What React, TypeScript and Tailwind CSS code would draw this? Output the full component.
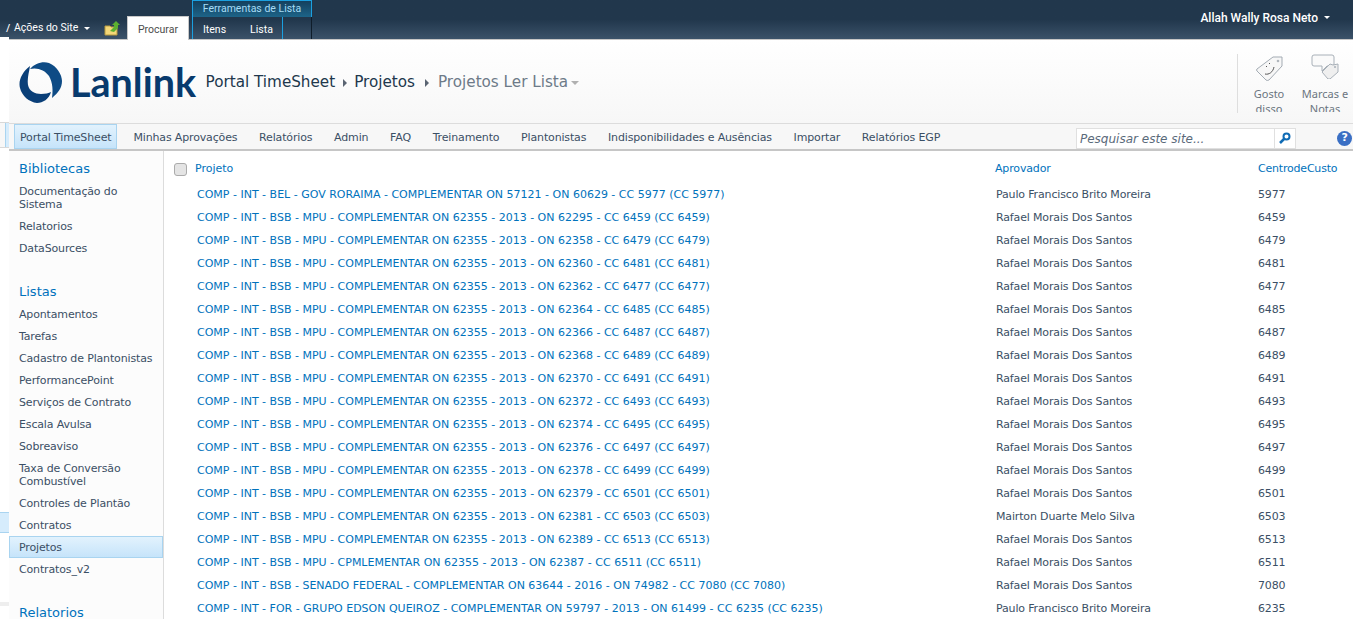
import React from 'react';

const NAV = ['Minhas Aprovações', 'Relatórios', 'Admin', 'FAQ', 'Treinamento', 'Plantonistas', 'Indisponibilidades e Ausências', 'Importar', 'Relatórios EGP'];

const ROWS: [string, string, string][] = [
  ['COMP - INT - BEL - GOV RORAIMA - COMPLEMENTAR ON 57121 - ON 60629 - CC 5977 (CC 5977)', 'Paulo Francisco Brito Moreira', '5977'],
  ['COMP - INT - BSB - MPU - COMPLEMENTAR ON 62355 - 2013 - ON 62295 - CC 6459 (CC 6459)', 'Rafael Morais Dos Santos', '6459'],
  ['COMP - INT - BSB - MPU - COMPLEMENTAR ON 62355 - 2013 - ON 62358 - CC 6479 (CC 6479)', 'Rafael Morais Dos Santos', '6479'],
  ['COMP - INT - BSB - MPU - COMPLEMENTAR ON 62355 - 2013 - ON 62360 - CC 6481 (CC 6481)', 'Rafael Morais Dos Santos', '6481'],
  ['COMP - INT - BSB - MPU - COMPLEMENTAR ON 62355 - 2013 - ON 62362 - CC 6477 (CC 6477)', 'Rafael Morais Dos Santos', '6477'],
  ['COMP - INT - BSB - MPU - COMPLEMENTAR ON 62355 - 2013 - ON 62364 - CC 6485 (CC 6485)', 'Rafael Morais Dos Santos', '6485'],
  ['COMP - INT - BSB - MPU - COMPLEMENTAR ON 62355 - 2013 - ON 62366 - CC 6487 (CC 6487)', 'Rafael Morais Dos Santos', '6487'],
  ['COMP - INT - BSB - MPU - COMPLEMENTAR ON 62355 - 2013 - ON 62368 - CC 6489 (CC 6489)', 'Rafael Morais Dos Santos', '6489'],
  ['COMP - INT - BSB - MPU - COMPLEMENTAR ON 62355 - 2013 - ON 62370 - CC 6491 (CC 6491)', 'Rafael Morais Dos Santos', '6491'],
  ['COMP - INT - BSB - MPU - COMPLEMENTAR ON 62355 - 2013 - ON 62372 - CC 6493 (CC 6493)', 'Rafael Morais Dos Santos', '6493'],
  ['COMP - INT - BSB - MPU - COMPLEMENTAR ON 62355 - 2013 - ON 62374 - CC 6495 (CC 6495)', 'Rafael Morais Dos Santos', '6495'],
  ['COMP - INT - BSB - MPU - COMPLEMENTAR ON 62355 - 2013 - ON 62376 - CC 6497 (CC 6497)', 'Rafael Morais Dos Santos', '6497'],
  ['COMP - INT - BSB - MPU - COMPLEMENTAR ON 62355 - 2013 - ON 62378 - CC 6499 (CC 6499)', 'Rafael Morais Dos Santos', '6499'],
  ['COMP - INT - BSB - MPU - COMPLEMENTAR ON 62355 - 2013 - ON 62379 - CC 6501 (CC 6501)', 'Rafael Morais Dos Santos', '6501'],
  ['COMP - INT - BSB - MPU - COMPLEMENTAR ON 62355 - 2013 - ON 62381 - CC 6503 (CC 6503)', 'Mairton Duarte Melo Silva', '6503'],
  ['COMP - INT - BSB - MPU - COMPLEMENTAR ON 62355 - 2013 - ON 62389 - CC 6513 (CC 6513)', 'Rafael Morais Dos Santos', '6513'],
  ['COMP - INT - BSB - MPU - CPMLEMENTAR ON 62355 - 2013 - ON 62387 - CC 6511 (CC 6511)', 'Rafael Morais Dos Santos', '6511'],
  ['COMP - INT - BSB - SENADO FEDERAL - COMPLEMENTAR ON 63644 - 2016 - ON 74982 - CC 7080 (CC 7080)', 'Rafael Morais Dos Santos', '7080'],
  ['COMP - INT - FOR - GRUPO EDSON QUEIROZ - COMPLEMENTAR ON 59797 - 2013 - ON 61499 - CC 6235 (CC 6235)', 'Paulo Francisco Brito Moreira', '6235'],
];

const Caret = () => <span className="ml-[6px] inline-block h-0 w-0 border-x-[3px] border-t-[3px] border-x-transparent border-t-white align-middle" />;

const Sep = ({ wide }: { wide?: boolean }) => (
  <span className={`${wide ? 'ml-[10px] mr-[9px]' : 'mx-[7.5px]'} mt-[2px] inline-block h-0 w-0 border-y-[4px] border-l-[4px] border-y-transparent border-l-[#5a6472]`} />
);

function SideItem({ children, active }: { children: React.ReactNode; active?: boolean }) {
  return (
    <div className={`leading-[13px] tracking-[-0.15px] ${active ? 'border border-[#a9d4f0] bg-gradient-to-b from-[#e2f2fd] to-[#c6e4fa] py-[3.5px] pl-[9px]' : 'py-[4.5px] pl-[10px]'}`}>
      {children}
    </div>
  );
}

export default function App() {
  return (
    <div className="relative h-[621px] w-[1353px] overflow-hidden bg-white text-[11px] text-[#3b4f65]" style={{ fontFamily: '"DejaVu Sans", Verdana, sans-serif' }}>
      {/* ribbon */}
      <div className="flex h-[40px] items-stretch border-b border-[#c6c6c6] bg-gradient-to-b from-[#21374c] via-[#21374c] to-[#3b5269] text-[10.5px] text-white" style={{ fontFamily: 'Roboto, sans-serif' }}>
        <div className="flex w-[127px] items-center pl-[14px] pt-[17px]">
          <span className="whitespace-nowrap">Ações do Site</span>
          <Caret />
          <svg className="ml-[14px]" width="17" height="15" viewBox="0 0 17 15">
            <path d="M1 5h5l1 1h6v8H1z" fill="#f3d778" stroke="#b79a3f" />
            <path d="M6 10l4-4V4H8l4-4 4 4h-2v3l-4 4z" fill="#5cb030" />
          </svg>
        </div>
        <div className="mt-[16px] flex h-[24px] w-[62px] items-center justify-center border-x border-t border-[#c8c8c8] bg-white pt-[3px] text-[#4c4c4c]">Procurar</div>
        <div className="ml-[3px] flex w-[120px] flex-col">
          <div className="flex h-[17px] items-center justify-center border-x border-t border-[#1ba0e0] bg-gradient-to-b from-[#14405e] to-[#1d6488] text-[#a6dcf5]">Ferramentas de Lista</div>
          <div className="flex flex-1 items-center border-x border-x-[#0f1d2a] border-l-[#1ba0e0] pl-[10px]">
            <span className="pt-[3px]">Itens</span>
            <span className="ml-[24px] pt-[3px]">Lista</span>
            <span className="ml-[9px] h-full w-px bg-[#1ba0e0]" />
          </div>
        </div>
        <div className="ml-auto flex items-center pr-[23px] pb-[4px] text-[12px] font-medium">
          Allah Wally Rosa Neto
          <Caret />
        </div>
      </div>

      {/* site title */}
      <div className="flex h-[84px] border-b border-[#dcdcdc] bg-gradient-to-b from-white to-[#f7f7f7] pl-[19px]">
        <div className="flex items-center pt-[1px]">
          <svg width="44" height="43" viewBox="0 0 44 43">
            <path d="M11 8C16 2 24 0 30 2c8 3 13 12 13 18 0 7-4 12-10 17 1-7 1-15-3-22C26 9 18 6 11 8z" fill="#0e4b85" />
            <path d="M11 5c-1 7-3 12-2 19 1 6 7 9 13 9 4 0 8-1 10-2-2 7-8 11-14 11-8-1-15-7-17-15C-1 20 3 11 11 5z" fill="#0a3f78" />
          </svg>
          <span className="ml-[7px] text-[39.5px] font-bold leading-none text-[#083a6d]" style={{ fontFamily: 'Lato, sans-serif' }}>Lanlink</span>
        </div>
        <div className="ml-[9.5px] flex items-center whitespace-nowrap pt-[1px] text-[15.2px] text-[#21374c]">
          <span>Portal TimeSheet</span>
          <Sep />
          <span>Projetos</span>
          <Sep wide />
          <span className="text-[#6d7a88]">Projetos Ler Lista</span>
          <span className="ml-[3px] mt-[2px] inline-block h-0 w-0 border-x-[4px] border-t-[4px] border-x-transparent border-t-[#b0b0b0]" />
        </div>
        <div className="ml-auto flex pr-[3px]">
          <div className="my-[14px] h-[59px] w-px bg-[#dedede]" />
          <div className="mt-[14px] flex h-[58px] w-[62px] flex-col items-center overflow-hidden text-center leading-[15px] text-[#6b7580]" style={{ fontFamily: '"Noto Sans", sans-serif' }}>
            <svg className="mt-[2px] shrink-0" width="27" height="25" viewBox="0 0 27 25">
              <path d="M1 13L17 1h9v9L13 24q-2 1-3 0L1 15q-1-1 0-2z" fill="#f7f7f7" stroke="#a3abb3" />
              <circle cx="22" cy="5" r="1.3" fill="#b0b6bc" />
              <path d="M10 11l1-1M13 8l1-1M9 18c4 1 8-2 9-7" fill="none" stroke="#555" />
            </svg>
            <span className="mt-[5px] w-[40px]">Gosto disso</span>
          </div>
          <div className="mt-[14px] flex h-[58px] w-[50px] flex-col items-center overflow-hidden text-center leading-[15px] text-[#6b7580]" style={{ fontFamily: '"Noto Sans", sans-serif' }}>
            <svg className="shrink-0" width="28" height="25" viewBox="0 0 28 25">
              <path d="M3 1h18q2 0 2 2v7q0 2-2 2h-5l-5 5v-5H3q-2 0-2-2V3q0-2 2-2z" fill="#fafafa" stroke="#a8b0b8" />
              <path d="M11 18l8-8 3 1 5-1v8l-8 7h-2z" fill="#efefef" stroke="#a8b0b8" />
              <circle cx="24" cy="13" r="1" fill="#a8b0b8" />
            </svg>
            <span className="mt-[7px] whitespace-nowrap">Marcas e<br />Notas</span>
          </div>
        </div>
      </div>

      {/* top nav */}
      <div className="flex h-[27px] border-b-2 border-[#c6c6c6] bg-[#f7f7f7] pl-[14px] tracking-[-0.15px]">
        <div className="flex h-[25px] items-center border border-[#a9d4f0] bg-gradient-to-b from-[#e2f2fd] to-[#c6e4fa] px-[5px] pt-[3px]">Portal TimeSheet</div>
        <div className="ml-[16px] flex items-center gap-[21.7px] whitespace-nowrap pt-[3px]">
          {NAV.map((n) => <span key={n}>{n}</span>)}
        </div>
        <div className="ml-auto flex items-center pl-[4px] pt-[3px]">
          <div className="flex h-[21px] w-[220px] items-center border border-[#e0e0e0] bg-white">
            <span className="flex-1 pl-[3px] pt-[1px] text-[12px] italic tracking-normal text-[#5a6a7a]">Pesquisar este site...</span>
            <div className="flex h-full w-[21px] items-center justify-center border-l border-[#e0e0e0]">
              <svg width="12" height="12" viewBox="0 0 12 12"><circle cx="7.5" cy="4.5" r="3" fill="none" stroke="#0f6bb5" strokeWidth="2" /><path d="M5 7l-4 4" stroke="#0f6bb5" strokeWidth="2.5" /></svg>
            </div>
          </div>
          <div className="ml-[41px] mr-[1px] flex h-[15px] w-[15px] items-center justify-center rounded-full bg-[#3a6fc4] text-[11px] font-bold text-white">?</div>
        </div>
      </div>

      <div className="flex">
        {/* quick launch */}
        <div className="h-[468px] w-[164px] shrink-0 overflow-hidden border-r border-[#dcdcdc] bg-[#fcfcfc] pl-[9px] pt-[10px]">
          <div className="mb-[3px] px-[10px] text-[13px] leading-[16px] text-[#0072bc]">Bibliotecas</div>
          <SideItem>Documentação do Sistema</SideItem>
          <SideItem>Relatorios</SideItem>
          <SideItem>DataSources</SideItem>
          <div className="mb-[3px] mt-[25px] px-[10px] text-[13px] leading-[16px] text-[#0072bc]">Listas</div>
          {['Apontamentos', 'Tarefas', 'Cadastro de Plantonistas', 'PerformancePoint', 'Serviços de Contrato', 'Escala Avulsa', 'Sobreaviso', 'Taxa de Conversão Combustível', 'Controles de Plantão', 'Contratos'].map((s) => <SideItem key={s}>{s}</SideItem>)}
          <SideItem active>Projetos</SideItem>
          <SideItem>Contratos_v2</SideItem>
          <div className="mt-[25px] px-[10px] text-[13px] leading-[16px] text-[#0072bc]">Relatorios</div>
        </div>

        {/* list */}
        <div className="min-w-0 flex-1 pl-[10px]">
          <div className="flex h-[33px] items-center pt-[3px] text-[#0072bc]">
            <span className="h-[13px] w-[13px] rounded-[3px] border border-[#ababab] bg-[#e4e4e4]" />
            <span className="ml-[8px] w-[800px]">Projeto</span>
            <span className="w-[263px] tracking-[-0.15px]">Aprovador</span>
            <span className="tracking-[-0.2px]">CentrodeCusto</span>
          </div>
          {ROWS.map((r) => (
            <div key={r[2]} className="flex h-[23px] items-center whitespace-nowrap">
              <span className="w-[822px] pl-[23px] text-[#0072bc]">{r[0]}</span>
              <span className="w-[262px] tracking-[-0.15px]">{r[1]}</span>
              <span className="tracking-[-0.15px]">{r[2]}</span>
            </div>
          ))}
        </div>
      </div>

      {/* offset strip along the left edge of the capture */}
      <div className="absolute left-0 top-[37px] flex h-[584px] w-[9px] flex-col bg-white">
        <div className="mt-[85px] flex h-[26px] border-y border-[#d8d8d8] bg-[#f7f7f7]">
          <div className="ml-[5px] flex-1 border-l border-[#a9d4f0] bg-[#d6ecfc]" />
        </div>
        <div className="mt-[364px] h-[21px] border-y border-[#a9d4f0] bg-[#d6ecfc]" />
        <div className="mt-[69px] h-[4px] bg-[#eeeeee]" />
      </div>
      <span className="absolute left-[6px] top-[21px] text-[11px] leading-[13px] text-white" style={{ fontFamily: '"Noto Sans", sans-serif' }}>/</span>
    </div>
  );
}
